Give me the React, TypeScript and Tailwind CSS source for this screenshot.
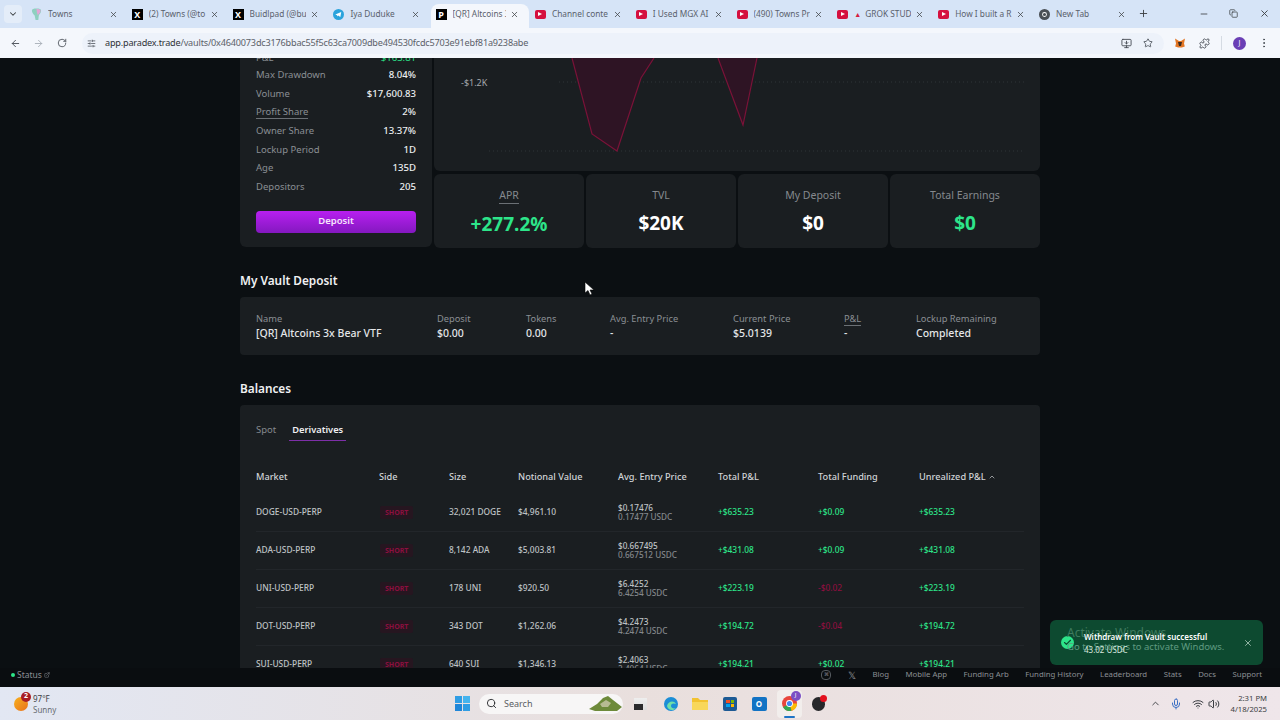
import {
  ArrowLeft,
  ArrowRight,
  Check,
  ChevronDown,
  ChevronUp,
  Copy,
  EllipsisVertical,
  ExternalLink,
  Mic,
  Minus,
  MonitorDown,
  Plus,
  Puzzle,
  RotateCw,
  Search,
  SlidersHorizontal,
  Star,
  Volume2,
  Wifi,
  X,
} from 'lucide-react'

const tabs = [
  { title: 'Towns', icon: 'towns' },
  { title: '(2) Towns (@to', icon: 'x' },
  { title: 'Buidlpad (@bu', icon: 'x' },
  { title: 'Iya Duduke', icon: 'tg' },
  { title: '[QR] Altcoins 3', icon: 'par', active: true },
  { title: 'Channel conte', icon: 'yt' },
  { title: 'I Used MGX AI', icon: 'yt' },
  { title: '(490) Towns Pr', icon: 'yt' },
  { title: 'GROK STUD', icon: 'yt', alert: true },
  { title: 'How I built a R', icon: 'yt' },
  { title: 'New Tab', icon: 'chrome' },
]

const vaultStats = [
  { label: 'Max Drawdown', value: '8.04%' },
  { label: 'Volume', value: '$17,600.83' },
  { label: 'Profit Share', value: '2%', dashed: true },
  { label: 'Owner Share', value: '13.37%' },
  { label: 'Lockup Period', value: '1D' },
  { label: 'Age', value: '135D' },
  { label: 'Depositors', value: '205' },
]

const bigStats = [
  { label: 'APR', value: '+277.2%', green: true, dashed: true },
  { label: 'TVL', value: '$20K' },
  { label: 'My Deposit', value: '$0' },
  { label: 'Total Earnings', value: '$0', green: true },
]

const deposit = [
  { w: 'w-[181px]', label: 'Name', value: '[QR] Altcoins 3x Bear VTF' },
  { w: 'w-[89px]', label: 'Deposit', value: '$0.00' },
  { w: 'w-[84px]', label: 'Tokens', value: '0.00' },
  { w: 'w-[123px]', label: 'Avg. Entry Price', value: '-' },
  { w: 'w-[111px]', label: 'Current Price', value: '$5.0139' },
  { w: 'w-[72px]', label: 'P&L', value: '-', dashed: true },
  { w: 'w-[100px]', label: 'Lockup Remaining', value: 'Completed' },
]

const rows = [
  ['DOGE-USD-PERP', '32,021 DOGE', '$4,961.10', '$0.17476', '0.17477 USDC', '+$635.23', '+$0.09', '+$635.23'],
  ['ADA-USD-PERP', '8,142 ADA', '$5,003.81', '$0.667495', '0.667512 USDC', '+$431.08', '+$0.09', '+$431.08'],
  ['UNI-USD-PERP', '178 UNI', '$920.50', '$6.4252', '6.4254 USDC', '+$223.19', '-$0.02', '+$223.19'],
  ['DOT-USD-PERP', '343 DOT', '$1,262.06', '$4.2473', '4.2474 USDC', '+$194.72', '-$0.04', '+$194.72'],
  ['SUI-USD-PERP', '640 SUI', '$1,346.13', '$2.4063', '2.4064 USDC', '+$194.21', '+$0.02', '+$194.21'],
]

const headers = ['Market', 'Side', 'Size', 'Notional Value', 'Avg. Entry Price', 'Total P&L', 'Total Funding']
const footerLinks = ['Blog', 'Mobile App', 'Funding Arb', 'Funding History', 'Leaderboard', 'Stats', 'Docs', 'Support']
const gridCols = 'grid grid-cols-[123px_70px_69px_100px_100px_100px_101px_1fr] items-center'

function Favicon({ kind }: { kind: string }) {
  if (kind === 'x' || kind === 'par') {
    return (
      <span className="flex h-[11px] w-[11px] items-center justify-center bg-black text-[9px] font-bold leading-none text-white">
        {kind === 'x' ? 'X' : 'P'}
      </span>
    )
  }
  if (kind === 'yt') {
    return (
      <span className="flex h-[9px] w-[11px] items-center justify-center rounded-[2px] bg-[#d5103f]">
        <span className="h-0 w-0 border-y-[2.5px] border-l-[4px] border-y-transparent border-l-white" />
      </span>
    )
  }
  if (kind === 'tg') {
    return (
      <svg width="11" height="11" viewBox="0 0 12 12">
        <circle cx="6" cy="6" r="6" fill="#2aa3dc" />
        <path d="M2.5 6 9 3.4 8 8.8 5.6 7.2 4.6 8.2 4.5 6.8z" fill="#fff" />
      </svg>
    )
  }
  if (kind === 'chrome') {
    return (
      <svg width="11" height="11" viewBox="0 0 12 12">
        <circle cx="6" cy="6" r="6" fill="#4a4f55" />
        <circle cx="6" cy="6" r="2.6" fill="#fff" />
        <circle cx="6" cy="6" r="1.7" fill="#4a4f55" />
      </svg>
    )
  }
  return (
    <svg width="11" height="13" viewBox="0 0 12 14">
      <path d="M1 2.5C1 1 3 .5 6 .5s5 .5 5 2c0 3-2 4-2.500 5.500L8 13H5L4 8C2.500 6.500 1 5 1 2.500z" fill="#8fd0c0" />
      <path d="M6 1c2.500 0 4.500.5 4.500 1.800C10.500 5 8 6 7.500 8L6.500 5z" fill="#e3a6d6" />
    </svg>
  )
}

function Tab({ title, icon, active, alert }: { title: string; icon: string; active?: boolean; alert?: boolean }) {
  return (
    <div
      className={
        active
          ? 'mx-[1.4px] flex h-[24px] w-[98px] shrink-0 items-center rounded-t-lg bg-[#f4f7fc] pb-[4px] pl-[5px] pr-[10px]'
          : 'flex h-[24px] w-[100.8px] shrink-0 items-center pb-[4px] pl-[5px] pr-[9px]'
      }
    >
      <span className="flex w-[15px] shrink-0 items-center">
        <Favicon kind={icon} />
      </span>
      <span className="ml-[2px] flex-1 overflow-hidden whitespace-nowrap text-[8.3px] text-[#5a616c]">
        {alert && <span className="mr-[4px] text-[7px] text-[#d5203f]">▲</span>}
        {title}
      </span>
      <X size={9} strokeWidth={2} className="ml-1 shrink-0 text-[#3c4043]" />
    </div>
  )
}

function BrowserChrome() {
  return (
    <header className="h-[58px] shrink-0 bg-[#d6e4f7]">
      <div className="flex h-[28px] items-end pl-[22px]">
        <div className="mb-[5px] ml-[-18px] mr-[4px] flex h-[18px] w-[18px] shrink-0 items-center justify-center rounded bg-[#e4edf9]">
          <ChevronDown size={10} strokeWidth={2.5} className="text-[#3c4043]" />
        </div>
        {tabs.map((t) => (
          <Tab key={t.title} title={t.title} icon={t.icon} active={t.active} alert={t.alert} />
        ))}
        <Plus size={11} strokeWidth={2} className="mb-[9px] ml-[3px] shrink-0 text-[#3c4043]" />
        <div className="mb-[9px] ml-auto flex items-center gap-[20.5px] pr-[10.5px] text-[#3c4043]">
          <Minus size={10} />
          <Copy size={9} />
          <X size={11} />
        </div>
      </div>
      <div className="flex h-[30px] items-center bg-[#f4f7fc] pl-[10px] pr-[9px] text-[#474d55]">
        <ArrowLeft size={11} strokeWidth={2} />
        <ArrowRight size={11} strokeWidth={2} className="ml-[12px] text-[#a9afb8]" />
        <RotateCw size={10} strokeWidth={2} className="ml-[13px]" />
        <div className="ml-[15px] flex h-[21px] w-[1082px] items-center rounded-full bg-[#edf2fa] pl-[5px] pr-[11px]">
          <SlidersHorizontal size={9} strokeWidth={2} />
          <span className="ml-[9px] text-[9.1px] tracking-[-0.02em] text-[#5b6169]">
            <span className="text-[#2e3338]">app.paradex.trade</span>
            /vaults/0x4640073dc3176bbac55f5c63ca7009dbe494530fcdc5703e91ebf81a9238abe
          </span>
          <MonitorDown size={11} className="ml-auto" />
          <Star size={10} className="ml-[11px]" />
        </div>
        <svg width="12" height="12" viewBox="0 0 12 12" className="ml-[10px]">
          <path d="M1 1.500 5 4h2l4-2.500-1 5 .8 3-3 1H4.200l-3-1 .8-3z" fill="#e27625" />
          <path d="M4 5h4L7 9H5z" fill="#3a2a20" />
        </svg>
        <Puzzle size={11} className="ml-[13px]" />
        <span className="ml-[11px] h-[14px] border-l border-[#d5dbe3]" />
        <span className="ml-[11px] flex h-[13px] w-[13px] items-center justify-center rounded-full bg-[#6a3fb5] text-[7px] text-white">
          J
        </span>
        <EllipsisVertical size={12} className="ml-[12px]" />
      </div>
    </header>
  )
}

function Chart() {
  return (
    <div className="relative h-[113px] rounded-b-md bg-[#1a1e21]">
      <svg width="606" height="113" viewBox="0 0 606 113" className="block">
        <line x1="125" y1="24" x2="590" y2="24" stroke="#2f3439" strokeDasharray="1 3" />
        <line x1="55" y1="93" x2="590" y2="93" stroke="#2f3439" strokeDasharray="1 3" />
        <path d="M138 0 158 76 183 93 207 20 220 0z" fill="#2e1424" />
        <path d="M138 0 158 76 183 93 207 20 220 0" fill="none" stroke="#7a1238" strokeWidth="1.2" />
        <path d="M284 0 309 67 323 0z" fill="#2e1424" />
        <path d="M284 0 309 67 323 0" fill="none" stroke="#7a1238" strokeWidth="1.2" />
      </svg>
      <span className="absolute left-[27px] top-[18px] text-[9px] text-[#a4a8ac]">-$1.2K</span>
    </div>
  )
}

function VaultCard() {
  return (
    <div className="flex h-[189px] w-[192px] shrink-0 flex-col rounded-b-md bg-[#1a1e21] px-4">
      <div className="-mt-[11px] flex h-[18.7px] shrink-0 translate-y-[2px] items-center justify-between text-[9.5px]">
        <span className="text-[#8a8f94]">P&L</span>
        <span className="text-[#2de58a]">$163.81</span>
      </div>
      {vaultStats.map((s) => (
        <div key={s.label} className="flex h-[18.7px] shrink-0 items-center justify-between">
          <span className={s.dashed ? 'border-b border-[#6b7075] text-[9.5px] leading-[12px] text-[#8a8f94]' : 'text-[9.5px] text-[#8a8f94]'}>
            {s.label}
          </span>
          <span className="text-[9.6px] font-medium text-[#eceef0]">{s.value}</span>
        </div>
      ))}
      <button className="mt-[14px] h-[22px] w-full shrink-0 rounded-[4px] bg-gradient-to-b from-[#b81ff0] to-[#8418c0] text-[9.5px] font-semibold text-[#f5e6fb]">
        Deposit
      </button>
    </div>
  )
}

function BigStats() {
  return (
    <div className="mt-[3px] grid grid-cols-4 gap-[2px]">
      {bigStats.map((s) => (
        <div key={s.label} className="flex h-[74px] flex-col items-center rounded-md bg-[#1a1e21] pt-[14px]">
          <span className={s.dashed ? 'border-b border-[#6b7075] text-[10.5px] leading-[15px] text-[#85898e]' : 'text-[10.5px] leading-[15px] text-[#85898e]'}>
            {s.label}
          </span>
          <span className={s.green ? 'mt-[8px] text-[19px] font-bold leading-[24px] text-[#2de58a]' : 'mt-[8px] text-[19px] font-bold leading-[24px] text-white'}>
            {s.value}
          </span>
        </div>
      ))}
    </div>
  )
}

function DepositCard() {
  return (
    <div className="mt-[7px] flex h-[58px] items-center rounded bg-[#1a1e21] px-4">
      {deposit.map((d) => (
        <div key={d.label} className={d.w}>
          <div className="whitespace-nowrap text-[9.3px] leading-[13px] text-[#8a8f94]">
            <span className={d.dashed ? 'border-b border-[#6b7075]' : ''}>{d.label}</span>
          </div>
          <div className="mt-[1px] whitespace-nowrap text-[10.5px] font-medium leading-[14px] text-[#e4e6e8]">{d.value}</div>
        </div>
      ))}
    </div>
  )
}

function BalancesCard() {
  return (
    <div className="mt-[7px] rounded-t bg-[#1a1e21] px-4">
      <div className="flex gap-[13px] pt-[18px]">
        <span className="h-[18px] text-[9.5px] leading-[13px] text-[#85898e]">Spot</span>
        <span className="h-[18px] border-b-[1.5px] border-[#7d2fa8] px-[3px] text-[9.3px] font-semibold leading-[13px] text-[#f0f0f2]">Derivatives</span>
      </div>
      <div className={`${gridCols} mt-[22px] h-[30.5px] text-[9.2px] font-medium text-[#d0d3d6]`}>
        {headers.map((h) => (
          <span key={h} className="mb-[3px]">{h}</span>
        ))}
        <span className="mb-[3px] flex items-center gap-[2px]">
          Unrealized P&L <ChevronUp size={8} />
        </span>
      </div>
      {rows.map((r) => (
        <div key={r[0]} className={`${gridCols} h-[38px] border-b border-[#22262a] text-[8.4px] font-medium`}>
          <span className="text-[#bfc2c5]">{r[0]}</span>
          <span className="pl-[1px]">
            <span className="rounded-[2px] bg-[#261620] px-[5px] py-[2px] text-[7px] font-bold text-[#8c0f3f]">SHORT</span>
          </span>
          <span className="text-[#bfc2c5]">{r[1]}</span>
          <span className="text-[#bfc2c5]">{r[2]}</span>
          <span className="text-[8.2px] leading-[9px]">
            <span className="block text-[#bfc2c5]">{r[3]}</span>
            <span className="block text-[#83878b]">{r[4]}</span>
          </span>
          <span className="text-[#2de58a]">{r[5]}</span>
          <span className={r[6].startsWith('-') ? 'text-[#8c0f3f]' : 'text-[#2de58a]'}>{r[6]}</span>
          <span className="text-[#2de58a]">{r[7]}</span>
        </div>
      ))}
    </div>
  )
}

function Toast() {
  return (
    <div className="absolute left-[1050px] top-[620px] flex h-[45px] w-[213px] items-center rounded-md bg-[#0d4a30] pl-[11px] pr-[10px]">
      <span className="flex h-[13px] w-[13px] shrink-0 items-center justify-center rounded-full bg-[#2de58a]">
        <Check size={9} strokeWidth={3} className="text-[#0d4a30]" />
      </span>
      <div className="relative ml-[10px] flex-1 text-[8px] leading-[13px]">
        <div className="absolute left-[-17px] top-[-6px] whitespace-nowrap text-[12px] leading-[18px] text-[#3f7a5e]">Activate Windows</div>
        <div className="absolute left-[-17px] top-[8px] whitespace-nowrap text-[9.5px] leading-[18px] text-[#5f9a80]">Go to Settings to activate Windows.</div>
        <div className="relative font-semibold text-white">Withdraw from Vault successful</div>
        <div className="relative text-[#d8e6df]">43.02 USDC</div>
      </div>
      <X size={10} strokeWidth={2} className="shrink-0 text-[#a9c7b8]" />
    </div>
  )
}

function FooterBar() {
  return (
    <footer className="flex h-[19px] shrink-0 items-center bg-[#0a0d10] pb-[5px] pl-[11px] pr-[18px] text-[7.8px] text-[#8a8f94]">
      <span className="h-[4px] w-[4px] rounded-full bg-[#2de58a]" />
      <span className="ml-[2px] text-[8.5px]">Status</span>
      <ExternalLink size={6} className="ml-[2px]" />
      <div className="ml-auto flex items-center gap-[16.5px]">
        <span className="flex h-[10px] w-[10px] items-center justify-center rounded-sm border border-[#555a5f] text-[5px]">⌘</span>
        <span className="text-[10px] leading-none">𝕏</span>
        {footerLinks.map((l) => (
          <span key={l}>{l}</span>
        ))}
      </div>
    </footer>
  )
}

function Taskbar() {
  return (
    <div className="relative flex h-[33px] shrink-0 items-center bg-gradient-to-r from-[#e2e7f3] via-[#e9dfdd] to-[#efe6ea] pl-[14px] pr-[13px]">
      <div className="relative h-[14px] w-[14px] rounded-full bg-gradient-to-br from-[#f7b11f] to-[#e8701a]">
        <span className="absolute -right-[3px] -top-[5px] flex h-[10px] w-[10px] items-center justify-center rounded-full bg-[#a81c24] text-[7px] font-bold text-white">2</span>
      </div>
      <div className="ml-[5px] text-[8px] leading-[11px] text-[#3a3d42]">
        <div>97°F</div>
        <div className="text-[#686c72]">Sunny</div>
      </div>
      <div className="absolute left-[455px] top-0 flex h-[33px] items-center">
        <div className="grid h-[15px] w-[15px] grid-cols-2 gap-[1px]">
          <span className="bg-[#2f9de4]" />
          <span className="bg-[#45b4ee]" />
          <span className="bg-[#1f86d8]" />
          <span className="bg-[#2f9de4]" />
        </div>
        <div className="ml-[9px] flex h-[20px] w-[144px] items-center rounded-full bg-[#f7f6f6] pl-[7px]">
          <Search size={11} className="text-[#26292c]" />
          <span className="ml-[7px] text-[9px] text-[#5b5e63]">Search</span>
          <svg width="33" height="16" viewBox="0 0 33 16" className="ml-auto mr-[1px]">
            <path d="M0 13 8 8 14 2 19 0 24 4 33 11 28 15H6z" fill="#6d8a3a" />
            <path d="M11 8 17 4 22 7 19 11 13 11z" fill="#b7bb92" />
          </svg>
        </div>
        <div className="ml-[11px] flex h-[12px] w-[13px] items-end bg-gradient-to-b from-[#eee] to-[#ddd]">
          <span className="h-[6px] w-[9px] bg-[#2a2a2c]" />
        </div>
        <svg width="14" height="14" viewBox="0 0 14 14" className="ml-[17px]">
          <circle cx="7" cy="7" r="7" fill="#1c8ed6" />
          <path d="M3 9c1-5 7-6 9-2-2-1-5-1-5 2 0 2 3 3 5 2-2 3-8 3-9-2z" fill="#6fe0a8" />
        </svg>
        <svg width="16" height="13" viewBox="0 0 16 13" className="ml-[14px]">
          <path d="M0 1h6l2 2h8v10H0z" fill="#f2c230" />
          <path d="M0 5h16v8H0z" fill="#f8d75a" />
        </svg>
        <span className="ml-[15px] grid h-[14px] w-[14px] grid-cols-2 place-content-center gap-[1px] rounded-[2px] bg-[#1d5a94] p-[3px]">
          <span className="h-[3px] bg-[#f25022]" />
          <span className="h-[3px] bg-[#7fba00]" />
          <span className="h-[3px] bg-[#00a4ef]" />
          <span className="h-[3px] bg-[#ffb900]" />
        </span>
        <span className="ml-[14.5px] flex h-[14px] w-[15px] items-center justify-center rounded-[2px] bg-[#1273c4] text-[8px] font-bold text-white">O</span>
        <span className="relative ml-[10px] flex h-[28px] w-[25px] items-center justify-center rounded bg-[#f2eeec]">
          <svg width="15" height="15" viewBox="0 0 14 14">
            <circle cx="7" cy="7" r="7" fill="#e8453c" />
            <path d="M7 7 1 10.500A7 7 0 0 0 9 13.700z" fill="#33a852" />
            <path d="M7 7 9 13.700A7 7 0 0 0 14 7z" fill="#fbbc05" />
            <circle cx="7" cy="7" r="3.200" fill="#fff" />
            <circle cx="7" cy="7" r="2.400" fill="#4285f4" />
          </svg>
          <span className="absolute right-[1px] top-[1px] flex h-[10px] w-[10px] items-center justify-center rounded-full bg-[#7b4fc4] text-[6px] text-white">J</span>
          <span className="absolute bottom-0 left-[7px] h-[2px] w-[11px] rounded-full bg-[#1e74c6]" />
        </span>
        <span className="relative ml-[10px] flex h-[14px] w-[13px] items-center justify-center rounded-full bg-[#27282b]">
          <span className="absolute -right-[2px] -top-[2px] h-[7px] w-[7px] rounded-full bg-[#e3101e]" />
        </span>
      </div>
      <div className="ml-auto flex items-center text-[#3a3d42]">
        <ChevronUp size={11} />
        <Mic size={12} className="ml-[9.5px] text-[#3b6fc4]" />
        <Wifi size={12} className="ml-[10px]" />
        <Volume2 size={12} className="ml-[4px]" />
        <div className="ml-[9px] w-[38px] text-right text-[7.7px] leading-[11px]">
          <div>2:31 PM</div>
          <div>4/18/2025</div>
        </div>
      </div>
    </div>
  )
}

export default function App() {
  return (
    <div className="relative flex h-[720px] w-[1280px] flex-col overflow-hidden font-['Noto_Sans',sans-serif]">
      <BrowserChrome />
      <main className="h-[610px] shrink-0 overflow-hidden bg-[#0b0f12]">
        <div className="mx-auto w-[800px]">
          <div className="flex gap-[2px]">
            <VaultCard />
            <div className="flex-1">
              <Chart />
              <BigStats />
            </div>
          </div>
          <h2 className="mt-[22px] text-[11.8px] font-semibold leading-[20px] text-[#f0f1f2]">My Vault Deposit</h2>
          <DepositCard />
          <h2 className="mt-[23px] text-[11.8px] font-semibold leading-[20px] text-[#f0f1f2]">Balances</h2>
          <BalancesCard />
        </div>
      </main>
      <FooterBar />
      <Taskbar />
      <Toast />
      <svg width="10" height="14" viewBox="0 0 10 14" className="absolute left-[584px] top-[282px]">
        <path d="M1 0v11l3-2.500 2 4.500 2-1-2-4h4z" fill="#fff" stroke="#000" strokeWidth=".6" />
      </svg>
    </div>
  )
}
